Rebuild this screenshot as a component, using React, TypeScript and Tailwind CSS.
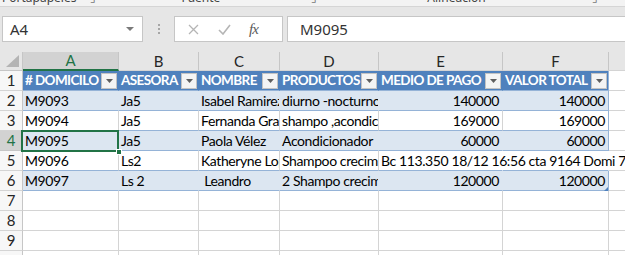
const widths = ['w-[96px]', 'w-[80px]', 'w-[81px]', 'w-[99px]', 'w-[124px]', 'w-[106px]']
const letters = ['A', 'B', 'C', 'D', 'E', 'F']
const heads = ['# DOMICILO', 'ASESORA', 'NOMBRE', 'PRODUCTOS', 'MEDIO DE PAGO', 'VALOR TOTAL']

const data = [
  ['M9093', 'Ja5', 'Isabel Ramirez', 'diurno -nocturno', '140000', '140000'],
  ['M9094', 'Ja5', 'Fernanda Gracia', 'shampo ,acondicionador', '169000', '169000'],
  ['M9095', 'Ja5', 'Paola Vélez', 'Acondicionador', '60000', '60000'],
  ['M9096', 'Ls2', 'Katheryne Lopez', 'Shampoo crecimiento', 'Bc 113.350 18/12 16:56 cta 9164 Domi 7 000', ''],
  ['M9097', 'Ls 2', ' Leandro', '2 Shampo crecimiento', '120000', '120000'],
]

function FilterButton() {
  return (
    <span className="w-[16px] h-[16px] mr-[1px] bg-[#f4f4f4] border border-[#c3c3c3] flex items-center justify-center shrink-0">
      <svg width="7" height="4" viewBox="0 0 7 4">
        <path d="M0 0h7L3.5 4z" fill="#5f5f5f" />
      </svg>
    </span>
  )
}

function RowHeader({ n, selected = false }: { n: number; selected?: boolean }) {
  return (
    <div
      className={`w-[23px] shrink-0 flex items-center justify-center border-b border-r text-[15px] ${
        selected
          ? 'bg-[#d2d2d2] text-[#217346] border-b-[#c6c6c6] border-r-[#217346]'
          : 'bg-[#f7f7f7] text-[#262626] border-b-[#d4d4d4] border-r-[#c6c6c6]'
      }`}
    >
      {n}
    </div>
  )
}

function EmptyRow({ n }: { n: number }) {
  return (
    <div className="flex h-[20px] shrink-0">
      <RowHeader n={n} />
      {widths.map((w, i) => (
        <div key={i} className={`${w} shrink-0 bg-white border-b border-r border-[#d4d4d4]`} />
      ))}
      <div className="flex-1 bg-white border-b border-[#d4d4d4]" />
    </div>
  )
}

export default function App() {
  return (
    <div className="w-[625px] h-[255px] overflow-hidden bg-[#e6e6e6] font-['Lato',sans-serif] text-black">
      {/* ribbon group labels, cut off at the top */}
      <div className="h-[7px] bg-[#f3f3f3] border-b border-[#d5d5d5] overflow-hidden relative text-[12px] text-[#444] font-['Noto_Sans',sans-serif] leading-none">
        <div className="flex items-start -mt-[8px]">
          <span className="ml-[2px]">Portapapeles</span>
          <span className="ml-[14px] text-[#777]">⌟</span>
          <span className="ml-[85px]">Fuente</span>
          <span className="ml-[91px] text-[#777]">⌟</span>
          <span className="ml-[110px]">Alineación</span>
          <span className="ml-[106px] text-[#777]">⌟</span>
        </div>
      </div>

      {/* formula bar */}
      <div className="flex h-[26px] mt-[9px] font-['Noto_Sans',sans-serif]">
        <div className="ml-[2px] w-[141px] bg-white border border-[#c6c6c6] flex items-center justify-between pl-[7px] pr-[8px] text-[15px] text-[#333]">
          <span>A4</span>
          <svg width="8" height="4" viewBox="0 0 8 4">
            <path d="M0 0h8L4 4z" fill="#7a7a7a" />
          </svg>
        </div>
        <div className="w-[31px] flex flex-col items-center justify-center gap-[2px]">
          <span className="w-[2px] h-[2px] bg-[#a6a6a6]" />
          <span className="w-[2px] h-[2px] bg-[#a6a6a6]" />
          <span className="w-[2px] h-[2px] bg-[#a6a6a6]" />
        </div>
        <div className="w-[109px] bg-white border border-[#c6c6c6] flex items-center">
          <svg className="ml-[13px]" width="11" height="11" viewBox="0 0 11 11">
            <path d="M1 1l9 9M10 1l-9 9" stroke="#b5b5b5" strokeWidth="1.3" />
          </svg>
          <svg className="ml-[19px]" width="13" height="11" viewBox="0 0 13 11">
            <path d="M1 6l4 4 7-9" stroke="#b5b5b5" strokeWidth="1.6" fill="none" />
          </svg>
          <span className="ml-[18px] font-['Liberation_Serif',serif] italic text-[15px] text-[#5a5a5a] tracking-[-1px]">fx</span>
        </div>
        <div className="ml-[4px] flex-1 bg-white border border-r-0 border-[#c6c6c6] flex items-center pl-[12px] text-[15px] text-[#333]">
          M9095
        </div>
      </div>

      {/* sheet */}
      <div className="relative mt-[10px] flex flex-col">
        {/* column letters */}
        <div className="flex h-[19px] shrink-0 text-[15px] text-[#262626]">
          <div className="w-[23px] shrink-0 border-r border-b border-[#c6c6c6] relative">
            <svg className="absolute right-[3px] bottom-[3px]" width="13" height="12" viewBox="0 0 13 12">
              <path d="M13 0v12H0z" fill="#b4b4b4" />
            </svg>
          </div>
          {letters.map((l, i) => (
            <div
              key={l}
              className={`${widths[i]} shrink-0 flex items-center justify-center border-r ${
                i === 0
                  ? 'bg-[#d2d2d2] text-[#217346] border-r-[#c6c6c6] border-b-2 border-b-[#217346]'
                  : 'border-r-[#c6c6c6] border-b border-b-[#d4d4d4]'
              }`}
            >
              {l}
            </div>
          ))}
          <div className="flex-1 border-b border-[#d4d4d4]" />
        </div>

        {/* table header */}
        <div className="flex h-[20px] shrink-0">
          <RowHeader n={1} />
          {heads.map((h, i) => (
            <div
              key={h}
              className={`${widths[i]} shrink-0 flex items-center justify-between pl-[2px] bg-[#4f81bd] border-b border-b-[#95b3d7] border-r ${
                i === 5 ? 'border-r-[#95b3d7]' : 'border-r-[#4f81bd]'
              } text-white font-bold text-[13.5px] tracking-[-0.6px] whitespace-pre overflow-hidden`}
            >
              <span>{h}</span>
              <FilterButton />
            </div>
          ))}
          <div className="flex-1 bg-white border-b border-[#d4d4d4]" />
        </div>

        {/* table body */}
        {data.map((row, r) => {
          const band = r % 2 === 0
          return (
            <div key={r} className="flex h-[20px] shrink-0">
              <RowHeader n={r + 2} selected={r === 2} />
              {row.map((t, i) => {
                const num = /^\d+$/.test(t)
                const spill = r === 3 && i === 4
                const underSpill = r === 3 && i === 5
                const rightBorder =
                  underSpill
                    ? 'border-r-white'
                    : i === 5
                      ? 'border-r-[#95b3d7]'
                      : band
                        ? 'border-r-[#dce6f1]'
                        : 'border-r-[#d4d4d4]'
                return (
                  <div
                    key={i}
                    className={`${widths[i]} shrink-0 flex items-center text-[14px] tracking-[-0.4px] whitespace-pre border-b border-b-[#95b3d7] border-r ${rightBorder} ${
                      band ? 'bg-[#dce6f1]' : 'bg-white'
                    } ${num ? 'justify-end pr-[3px]' : 'pl-[2px]'} ${
                      spill ? 'relative z-10 overflow-visible border-r-white' : 'overflow-hidden'
                    }`}
                  >
                    {t}
                  </div>
                )
              })}
              <div className={`flex-1 bg-white border-b border-[#d4d4d4]`} />
            </div>
          )
        })}

        <EmptyRow n={7} />
        <EmptyRow n={8} />
        <EmptyRow n={9} />
        <EmptyRow n={10} />

        {/* active cell A4 */}
        <div className="absolute left-[21px] top-[78px] w-[98px] h-[22px] border-2 border-[#217346] z-20" />
        <div className="absolute left-[116px] top-[97px] w-[6px] h-[6px] bg-[#217346] border border-white z-20" />
        {/* table resize handle */}
        <svg className="absolute left-[604px] top-[135px] z-20" width="4" height="4" viewBox="0 0 4 4">
          <path d="M4 0v4H0z" fill="#4f81bd" />
        </svg>
      </div>
    </div>
  )
}
